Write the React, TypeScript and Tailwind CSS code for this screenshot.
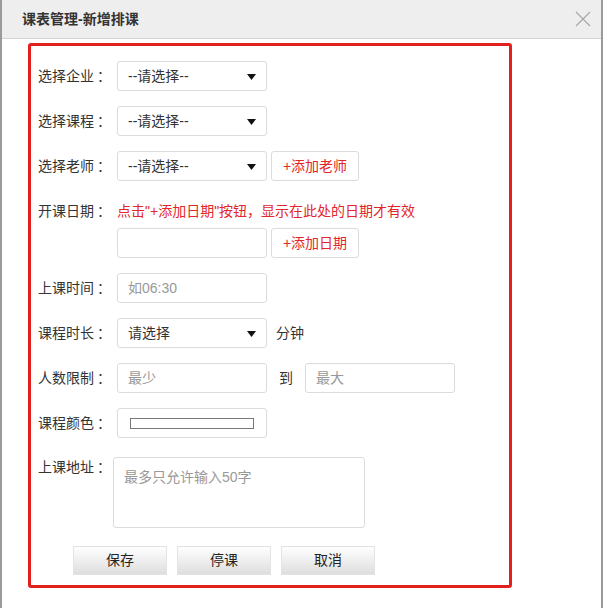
import React from "react";

const font = { fontFamily: '"Liberation Sans", "Noto Sans CJK SC", sans-serif' };

function Caret() {
  return (
    <svg width="9" height="6" viewBox="0 0 9 6" className="absolute right-[10px] top-[12px]">
      <path d="M0 0 L9 0 L4.5 6 Z" fill="#111" />
    </svg>
  );
}

function Select({ text }: { text: string }) {
  return (
    <div className="relative flex h-[30px] w-[150px] items-center rounded-[3px] border border-[#dcdcdc] bg-white pl-[10px] text-[14px] text-[#333]">
      {text}
      <Caret />
    </div>
  );
}

function Input({ placeholder = "", w = "w-[150px]" }: { placeholder?: string; w?: string }) {
  return (
    <div className={`flex h-[30px] ${w} items-center rounded-[3px] border border-[#dcdcdc] bg-white pl-[10px] text-[14px] text-[#999]`}>
      {placeholder}
    </div>
  );
}

function Label({ text, w = "w-[79px]" }: { text?: string; w?: string }) {
  return (
    <div className={`${w} shrink-0 text-[14px] text-[#333]`}>
      {text}
      {text && <span className="ml-[3px]">：</span>}
    </div>
  );
}

function RedBtn({ children }: { children: React.ReactNode }) {
  return (
    <div className="ml-[4px] flex h-[30px] w-[88px] items-center justify-center rounded-[3px] border border-[#dcdcdc] bg-white text-[14px] text-[#e3262a]">
      {children}
    </div>
  );
}

function GrayBtn({ children }: { children: React.ReactNode }) {
  return (
    <div className="flex h-[29px] w-[94px] items-center justify-center border border-[#e2e2e2] bg-gradient-to-b from-white to-[#dedede] text-[14px] text-[#222]">
      {children}
    </div>
  );
}

export default function App() {
  return (
    <div className="h-[608px] w-[605px] overflow-hidden bg-white" style={font}>
      <div className="h-full w-[603px] border-x-2 border-[#9a9a9a] bg-white">
        {/* title bar */}
        <div className="flex h-[39px] items-center justify-between border-b border-[#d4d4d4] bg-[#eeeeee] pl-[20px] pr-[10px]">
          <span className="text-[14px] font-bold text-[#333]">课表管理-新增排课</span>
          <svg width="16" height="16" viewBox="0 0 16 16">
            <path d="M1 1 L15 15 M15 1 L1 15" stroke="#aaa" strokeWidth="1.3" />
          </svg>
        </div>

        {/* form */}
        <div className="ml-[26px] mt-[4px] h-[545px] w-[484px] rounded-[3px] border-[3px] border-[#e3211c] pl-[7px] pt-[15px]">
          <div className="flex items-center">
            <Label text="选择企业" />
            <Select text="--请选择--" />
          </div>
          <div className="mt-[15px] flex items-center">
            <Label text="选择课程" />
            <Select text="--请选择--" />
          </div>
          <div className="mt-[15px] flex items-center">
            <Label text="选择老师" />
            <Select text="--请选择--" />
            <RedBtn>+添加老师</RedBtn>
          </div>
          <div className="mt-[20px] flex h-[20px] items-center">
            <Label text="开课日期" />
            <span className="text-[14px] text-[#e3262a]">点击"+添加日期"按钮，显示在此处的日期才有效</span>
          </div>
          <div className="mt-[7px] flex items-center">
            <Label />
            <Input />
            <RedBtn>+添加日期</RedBtn>
          </div>
          <div className="mt-[15px] flex items-center">
            <Label text="上课时间" />
            <Input placeholder="如06:30" />
          </div>
          <div className="mt-[15px] flex items-center">
            <Label text="课程时长" />
            <Select text="请选择" />
            <span className="ml-[9px] text-[14px] text-[#333]">分钟</span>
          </div>
          <div className="mt-[15px] flex items-center">
            <Label text="人数限制" />
            <Input placeholder="最少" />
            <span className="w-[38px] text-center text-[14px] text-[#333]">到</span>
            <Input placeholder="最大" />
          </div>
          <div className="mt-[15px] flex items-center">
            <Label text="课程颜色" />
            <div className="flex h-[30px] w-[150px] items-center rounded-[3px] border border-[#dcdcdc] bg-white pl-[12px]">
              <div className="h-[11px] w-[124px] border border-[#777] bg-white" />
            </div>
          </div>
          <div className="mt-[19px] flex items-start">
            <Label text="上课地址" w="w-[75px]" />
            <div className="h-[71px] w-[252px] rounded-[3px] border border-[#dcdcdc] bg-white pl-[10px] pt-[9px] text-[14px] text-[#999]">
              最多只允许输入50字
            </div>
          </div>
          <div className="ml-[35px] mt-[18px] flex gap-[10px]">
            <GrayBtn>保存</GrayBtn>
            <GrayBtn>停课</GrayBtn>
            <GrayBtn>取消</GrayBtn>
          </div>
        </div>
      </div>
    </div>
  );
}
